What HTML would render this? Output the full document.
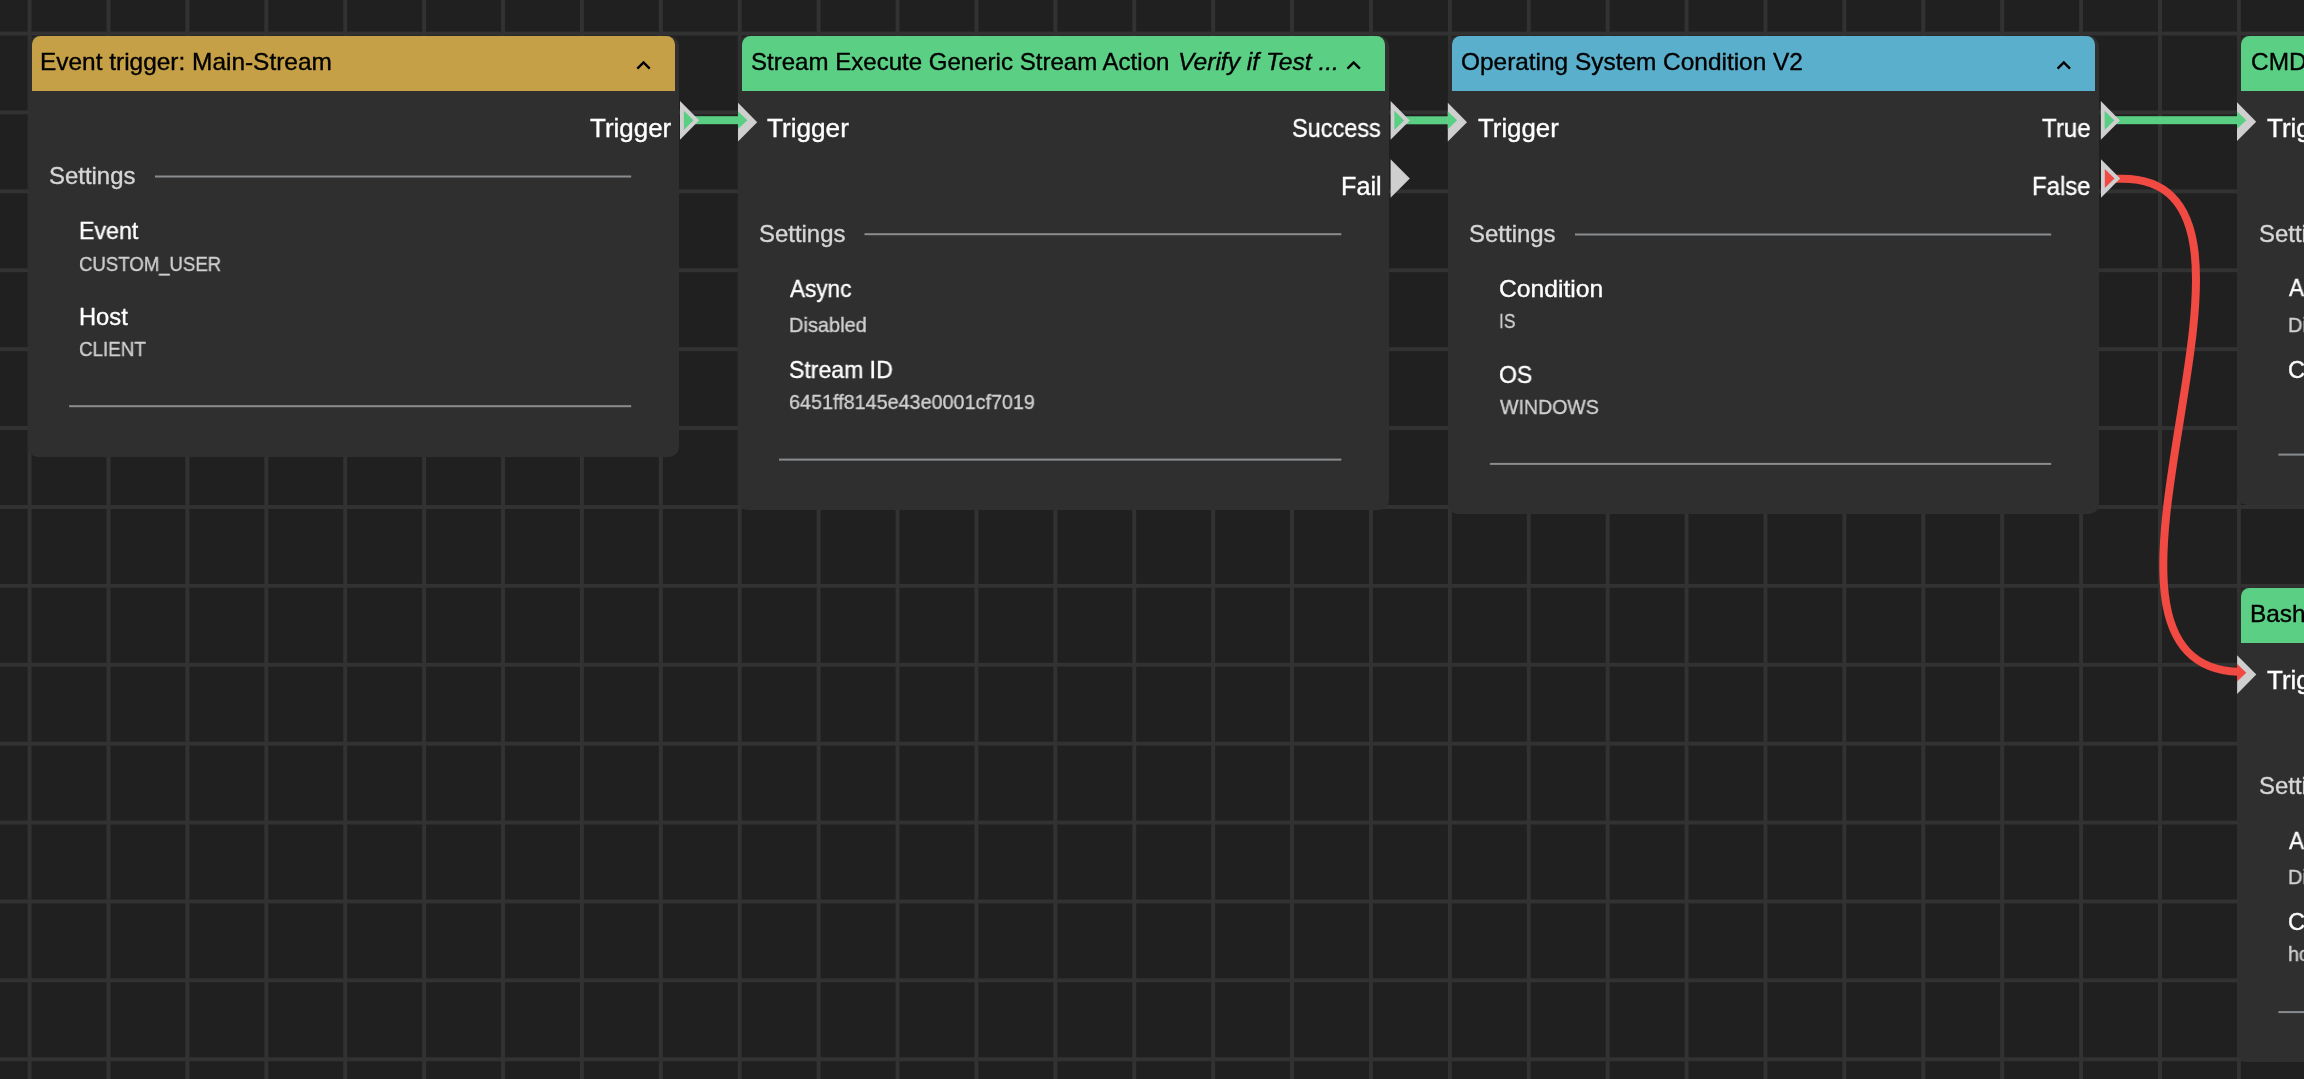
<!DOCTYPE html><html><head><meta charset="utf-8"><style>
html,body{margin:0;padding:0;width:2304px;height:1079px;overflow:hidden;background:#202020;}
.n{position:absolute;background:#2f2f2f;border-radius:10px;}
.hd{position:absolute;border-radius:8.5px 8.5px 0 0;}
.t{position:absolute;white-space:nowrap;font-family:"Liberation Sans",sans-serif;will-change:transform;-webkit-text-stroke:0.35px currentColor;}
svg{position:absolute;left:0;top:0;}
</style></head><body>
<svg width="2304" height="1079" viewBox="0 0 2304 1079"><rect x="27.62" y="0" width="3.945" height="1079" fill="#323232"/><rect x="106.52" y="0" width="3.945" height="1079" fill="#323232"/><rect x="185.42" y="0" width="3.945" height="1079" fill="#323232"/><rect x="264.33" y="0" width="3.945" height="1079" fill="#323232"/><rect x="343.23" y="0" width="3.945" height="1079" fill="#323232"/><rect x="422.14" y="0" width="3.945" height="1079" fill="#323232"/><rect x="501.04" y="0" width="3.945" height="1079" fill="#323232"/><rect x="579.95" y="0" width="3.945" height="1079" fill="#323232"/><rect x="658.85" y="0" width="3.945" height="1079" fill="#323232"/><rect x="737.75" y="0" width="3.945" height="1079" fill="#323232"/><rect x="816.66" y="0" width="3.945" height="1079" fill="#323232"/><rect x="895.56" y="0" width="3.945" height="1079" fill="#323232"/><rect x="974.47" y="0" width="3.945" height="1079" fill="#323232"/><rect x="1053.37" y="0" width="3.945" height="1079" fill="#323232"/><rect x="1132.27" y="0" width="3.945" height="1079" fill="#323232"/><rect x="1211.18" y="0" width="3.945" height="1079" fill="#323232"/><rect x="1290.08" y="0" width="3.945" height="1079" fill="#323232"/><rect x="1368.99" y="0" width="3.945" height="1079" fill="#323232"/><rect x="1447.89" y="0" width="3.945" height="1079" fill="#323232"/><rect x="1526.79" y="0" width="3.945" height="1079" fill="#323232"/><rect x="1605.70" y="0" width="3.945" height="1079" fill="#323232"/><rect x="1684.60" y="0" width="3.945" height="1079" fill="#323232"/><rect x="1763.51" y="0" width="3.945" height="1079" fill="#323232"/><rect x="1842.41" y="0" width="3.945" height="1079" fill="#323232"/><rect x="1921.32" y="0" width="3.945" height="1079" fill="#323232"/><rect x="2000.22" y="0" width="3.945" height="1079" fill="#323232"/><rect x="2079.12" y="0" width="3.945" height="1079" fill="#323232"/><rect x="2158.03" y="0" width="3.945" height="1079" fill="#323232"/><rect x="2236.93" y="0" width="3.945" height="1079" fill="#323232"/><rect x="0" y="31.56" width="2304" height="3.945" fill="#323232"/><rect x="0" y="110.47" width="2304" height="3.945" fill="#323232"/><rect x="0" y="189.37" width="2304" height="3.945" fill="#323232"/><rect x="0" y="268.27" width="2304" height="3.945" fill="#323232"/><rect x="0" y="347.18" width="2304" height="3.945" fill="#323232"/><rect x="0" y="426.08" width="2304" height="3.945" fill="#323232"/><rect x="0" y="504.99" width="2304" height="3.945" fill="#323232"/><rect x="0" y="583.89" width="2304" height="3.945" fill="#323232"/><rect x="0" y="662.79" width="2304" height="3.945" fill="#323232"/><rect x="0" y="741.70" width="2304" height="3.945" fill="#323232"/><rect x="0" y="820.60" width="2304" height="3.945" fill="#323232"/><rect x="0" y="899.51" width="2304" height="3.945" fill="#323232"/><rect x="0" y="978.41" width="2304" height="3.945" fill="#323232"/><rect x="0" y="1057.32" width="2304" height="3.945" fill="#323232"/></svg>
<div class="n" style="left:27.61643835616438px;top:35.50684931506849px;width:650.958904109589px;height:421.19px"></div>
<div class="hd" style="left:31.561643835616437px;top:35.50684931506849px;width:643.0684931506848px;height:55.23287671232876px;background:#c6a046"></div>
<div class="n" style="left:737.7534246575342px;top:35.50684931506849px;width:650.958904109589px;height:474.09px"></div>
<div class="hd" style="left:741.6986301369863px;top:35.50684931506849px;width:643.0684931506848px;height:55.23287671232876px;background:#5bcf84"></div>
<div class="n" style="left:1447.890410958904px;top:35.50684931506849px;width:650.958904109589px;height:478.69px"></div>
<div class="hd" style="left:1451.835616438356px;top:35.50684931506849px;width:643.0684931506848px;height:55.23287671232876px;background:#5aafcc"></div>
<div class="n" style="left:2236.931506849315px;top:35.50684931506849px;width:650.958904109589px;height:469.49px"></div>
<div class="hd" style="left:2240.876712328767px;top:35.50684931506849px;width:643.0684931506848px;height:55.23287671232876px;background:#5bcf84"></div>
<div class="n" style="left:2236.931506849315px;top:587.8356164383562px;width:650.958904109589px;height:473.96px"></div>
<div class="hd" style="left:2240.876712328767px;top:587.8356164383562px;width:643.0684931506848px;height:55.23287671232876px;background:#5bcf84"></div>
<svg width="2304" height="1079" viewBox="0 0 2304 1079"><rect x="155" y="175.50" width="476.20" height="2" fill="#8a8d90"/><rect x="69.1" y="405.20" width="562.10" height="2" fill="#8a8d90"/><rect x="864.5" y="233.20" width="476.80" height="2" fill="#8a8d90"/><rect x="779.0" y="458.60" width="562.30" height="2" fill="#8a8d90"/><rect x="1575.0" y="233.50" width="476.20" height="2" fill="#8a8d90"/><rect x="1489.9" y="462.90" width="561.30" height="2" fill="#8a8d90"/><rect x="2364" y="233.20" width="236.00" height="2" fill="#8a8d90"/><rect x="2278.4" y="453.60" width="321.60" height="2" fill="#8a8d90"/><rect x="2364" y="785.70" width="236.00" height="2" fill="#8a8d90"/><rect x="2278.4" y="1011.10" width="321.60" height="2" fill="#8a8d90"/><path d="M637.33 68.61 L643.53 62.41 L649.73 68.61" fill="none" stroke="#000" stroke-width="2.4"/><path d="M1347.47 68.61 L1353.67 62.41 L1359.87 68.61" fill="none" stroke="#000" stroke-width="2.4"/><path d="M2057.60 68.61 L2063.80 62.41 L2070.00 68.61" fill="none" stroke="#000" stroke-width="2.4"/><rect x="690" y="116.2" width="49" height="8" fill="#5ace82"/><rect x="1400" y="116.3" width="48.5" height="8" fill="#5ace82"/><rect x="2110" y="116.2" width="127.5" height="8" fill="#5ace82"/><defs><clipPath id="rc"><rect x="2000" y="0" width="238" height="1079"/></clipPath></defs><path d="M2110 178.8 L2118.4 178.8 C2323.2 172.4 2032.8 678.1 2246.4 671.8" fill="none" stroke="#f04a42" stroke-width="8" clip-path="url(#rc)"/><path d="M680.0 100.95 L680.0 139.65 L699.20 120.30 Z" fill="#cfcfcf"/><path d="M683.80 110.70 L683.80 129.90 L693.50 120.30 Z" fill="#5ace82"/><path d="M1390.6 101.05 L1390.6 139.75 L1409.80 120.40 Z" fill="#cfcfcf"/><path d="M1394.40 110.80 L1394.40 130.00 L1404.10 120.40 Z" fill="#5ace82"/><path d="M1390.6 159.15 L1390.6 197.85 L1409.80 178.50 Z" fill="#cfcfcf"/><path d="M2100.8 101.05 L2100.8 139.75 L2120.00 120.40 Z" fill="#cfcfcf"/><path d="M2104.60 110.80 L2104.60 130.00 L2114.30 120.40 Z" fill="#5ace82"/><path d="M2101.0 159.15 L2101.0 197.85 L2120.20 178.50 Z" fill="#cfcfcf"/><path d="M2104.80 168.90 L2104.80 188.10 L2114.50 178.50 Z" fill="#f04a42"/><path d="M738.0 102.85 L738.0 141.55 L757.20 122.20 Z" fill="#cfcfcf"/><path d="M1447.8 102.85 L1447.8 141.55 L1467.00 122.20 Z" fill="#cfcfcf"/><path d="M2237.0 102.35 L2237.0 141.05 L2256.20 121.70 Z" fill="#cfcfcf"/><path d="M2237.1 655.25 L2237.1 693.95 L2256.30 674.60 Z" fill="#cfcfcf"/><path d="M738.0 111.30 L738.0 129.10 L747.30 120.20 Z" fill="#5ace82"/><path d="M1447.8 111.40 L1447.8 129.20 L1457.10 120.30 Z" fill="#5ace82"/><path d="M2237.0 111.30 L2237.0 129.10 L2246.30 120.20 Z" fill="#5ace82"/><path d="M2237.0 663.80 L2237.0 681.60 L2246.30 672.70 Z" fill="#f04a42"/></svg>
<div class="t" style="left:40.29px;top:50.60px;font-size:23.2px;line-height:23.2px;letter-spacing:0.000px;color:#000;transform:scaleX(1.0533);transform-origin:0 0;">Event trigger: Main-Stream</div>
<div class="t" style="left:589.70px;top:115.90px;font-size:25.2px;line-height:25.2px;letter-spacing:0.000px;color:#ffffff;transform:scaleX(1.0304);transform-origin:0 0;">Trigger</div>
<div class="t" style="left:49.00px;top:163.60px;font-size:23.8px;line-height:23.8px;letter-spacing:0.000px;color:#d6d6d6;transform:scaleX(1.0048);transform-origin:0 0;">Settings</div>
<div class="t" style="left:78.84px;top:220.20px;font-size:23.6px;line-height:23.6px;letter-spacing:0.000px;color:#ffffff;transform:scaleX(0.9822);transform-origin:0 0;">Event</div>
<div class="t" style="left:78.81px;top:253.60px;font-size:20.8px;line-height:20.8px;letter-spacing:0.000px;color:#d0d0d0;transform:scaleX(0.8936);transform-origin:0 0;">CUSTOM_USER</div>
<div class="t" style="left:78.79px;top:305.50px;font-size:23.6px;line-height:23.6px;letter-spacing:0.000px;color:#ffffff;transform:scaleX(1.0043);transform-origin:0 0;">Host</div>
<div class="t" style="left:78.80px;top:339.00px;font-size:20.8px;line-height:20.8px;letter-spacing:0.000px;color:#d0d0d0;transform:scaleX(0.9041);transform-origin:0 0;">CLIENT</div>
<div class="t" style="left:751.36px;top:50.70px;font-size:23.2px;line-height:23.2px;letter-spacing:0.000px;color:#000;transform:scaleX(1.0372);transform-origin:0 0;">Stream Execute Generic Stream Action</div>
<div class="t" style="left:1177.88px;top:50.70px;font-size:23.2px;line-height:23.2px;letter-spacing:0.000px;color:#000;font-style:italic;transform:scaleX(1.0612);transform-origin:0 0;">Verify if Test ...</div>
<div class="t" style="left:767.00px;top:116.10px;font-size:25.2px;line-height:25.2px;letter-spacing:0.000px;color:#ffffff;transform:scaleX(1.0380);transform-origin:0 0;">Trigger</div>
<div class="t" style="left:1291.77px;top:116.20px;font-size:25.2px;line-height:25.2px;letter-spacing:0.000px;color:#ffffff;transform:scaleX(0.9330);transform-origin:0 0;">Success</div>
<div class="t" style="left:1340.72px;top:174.30px;font-size:25.2px;line-height:25.2px;letter-spacing:0.000px;color:#ffffff;transform:scaleX(0.9919);transform-origin:0 0;">Fail</div>
<div class="t" style="left:759.00px;top:221.50px;font-size:23.8px;line-height:23.8px;letter-spacing:0.000px;color:#d6d6d6;transform:scaleX(1.0048);transform-origin:0 0;">Settings</div>
<div class="t" style="left:789.60px;top:278.10px;font-size:23.6px;line-height:23.6px;letter-spacing:0.000px;color:#ffffff;transform:scaleX(0.9562);transform-origin:0 0;">Async</div>
<div class="t" style="left:789.04px;top:315.30px;font-size:20.8px;line-height:20.8px;letter-spacing:0.000px;color:#d0d0d0;transform:scaleX(0.9620);transform-origin:0 0;">Disabled</div>
<div class="t" style="left:789.02px;top:358.70px;font-size:23.6px;line-height:23.6px;letter-spacing:0.000px;color:#ffffff;transform:scaleX(0.9762);transform-origin:0 0;">Stream ID</div>
<div class="t" style="left:789.05px;top:392.00px;font-size:20.8px;line-height:20.8px;letter-spacing:0.000px;color:#d0d0d0;transform:scaleX(0.9506);transform-origin:0 0;">6451ff8145e43e0001cf7019</div>
<div class="t" style="left:1461.45px;top:51.00px;font-size:23.2px;line-height:23.2px;letter-spacing:0.000px;color:#000;transform:scaleX(1.0526);transform-origin:0 0;">Operating System Condition V2</div>
<div class="t" style="left:1477.80px;top:116.10px;font-size:25.2px;line-height:25.2px;letter-spacing:0.000px;color:#ffffff;transform:scaleX(1.0241);transform-origin:0 0;">Trigger</div>
<div class="t" style="left:2042.10px;top:115.90px;font-size:25.2px;line-height:25.2px;letter-spacing:0.000px;color:#ffffff;transform:scaleX(0.9580);transform-origin:0 0;">True</div>
<div class="t" style="left:2032.10px;top:174.30px;font-size:25.2px;line-height:25.2px;letter-spacing:0.000px;color:#ffffff;transform:scaleX(0.9492);transform-origin:0 0;">False</div>
<div class="t" style="left:1469.39px;top:221.70px;font-size:23.8px;line-height:23.8px;letter-spacing:0.000px;color:#d6d6d6;transform:scaleX(1.0071);transform-origin:0 0;">Settings</div>
<div class="t" style="left:1498.95px;top:278.10px;font-size:23.6px;line-height:23.6px;letter-spacing:0.000px;color:#ffffff;transform:scaleX(1.0459);transform-origin:0 0;">Condition</div>
<div class="t" style="left:1498.62px;top:311.40px;font-size:20.8px;line-height:20.8px;letter-spacing:0.000px;color:#d0d0d0;transform:scaleX(0.8412);transform-origin:0 0;">IS</div>
<div class="t" style="left:1499.02px;top:364.30px;font-size:23.6px;line-height:23.6px;letter-spacing:0.000px;color:#ffffff;transform:scaleX(0.9781);transform-origin:0 0;">OS</div>
<div class="t" style="left:1499.60px;top:396.80px;font-size:20.8px;line-height:20.8px;letter-spacing:0.000px;color:#d0d0d0;transform:scaleX(0.9400);transform-origin:0 0;">WINDOWS</div>
<div class="t" style="left:2250.55px;top:50.90px;font-size:23.2px;line-height:23.2px;letter-spacing:0.000px;color:#000;transform:scaleX(1.0533);transform-origin:0 0;">CMD Execute Command</div>
<div class="t" style="left:2267.00px;top:116.00px;font-size:25.2px;line-height:25.2px;letter-spacing:0.000px;color:#ffffff;transform:scaleX(1.0304);transform-origin:0 0;">Trigger</div>
<div class="t" style="left:2258.70px;top:221.50px;font-size:23.8px;line-height:23.8px;letter-spacing:0.000px;color:#d6d6d6;transform:scaleX(1.0048);transform-origin:0 0;">Settings</div>
<div class="t" style="left:2288.50px;top:277.40px;font-size:23.6px;line-height:23.6px;letter-spacing:0.000px;color:#ffffff;transform:scaleX(0.9562);transform-origin:0 0;">Async</div>
<div class="t" style="left:2287.54px;top:315.00px;font-size:20.8px;line-height:20.8px;letter-spacing:0.000px;color:#d0d0d0;transform:scaleX(0.9620);transform-origin:0 0;">Disabled</div>
<div class="t" style="left:2287.52px;top:359.00px;font-size:23.6px;line-height:23.6px;letter-spacing:0.000px;color:#ffffff;transform:scaleX(0.9822);transform-origin:0 0;">Command</div>
<div class="t" style="left:2250.09px;top:602.70px;font-size:23.2px;line-height:23.2px;letter-spacing:0.000px;color:#000;transform:scaleX(1.0533);transform-origin:0 0;">Bash Execute Command</div>
<div class="t" style="left:2266.70px;top:668.40px;font-size:25.2px;line-height:25.2px;letter-spacing:0.000px;color:#ffffff;transform:scaleX(1.0304);transform-origin:0 0;">Trigger</div>
<div class="t" style="left:2258.60px;top:774.00px;font-size:23.8px;line-height:23.8px;letter-spacing:0.000px;color:#d6d6d6;transform:scaleX(1.0048);transform-origin:0 0;">Settings</div>
<div class="t" style="left:2288.50px;top:829.80px;font-size:23.6px;line-height:23.6px;letter-spacing:0.000px;color:#ffffff;transform:scaleX(0.9562);transform-origin:0 0;">Async</div>
<div class="t" style="left:2287.54px;top:867.30px;font-size:20.8px;line-height:20.8px;letter-spacing:0.000px;color:#d0d0d0;transform:scaleX(0.9620);transform-origin:0 0;">Disabled</div>
<div class="t" style="left:2287.52px;top:911.00px;font-size:23.6px;line-height:23.6px;letter-spacing:0.000px;color:#ffffff;transform:scaleX(0.9822);transform-origin:0 0;">Command</div>
<div class="t" style="left:2287.55px;top:944.00px;font-size:20.8px;line-height:20.8px;letter-spacing:0.000px;color:#d0d0d0;transform:scaleX(0.9506);transform-origin:0 0;">hostname</div>
</body></html>
